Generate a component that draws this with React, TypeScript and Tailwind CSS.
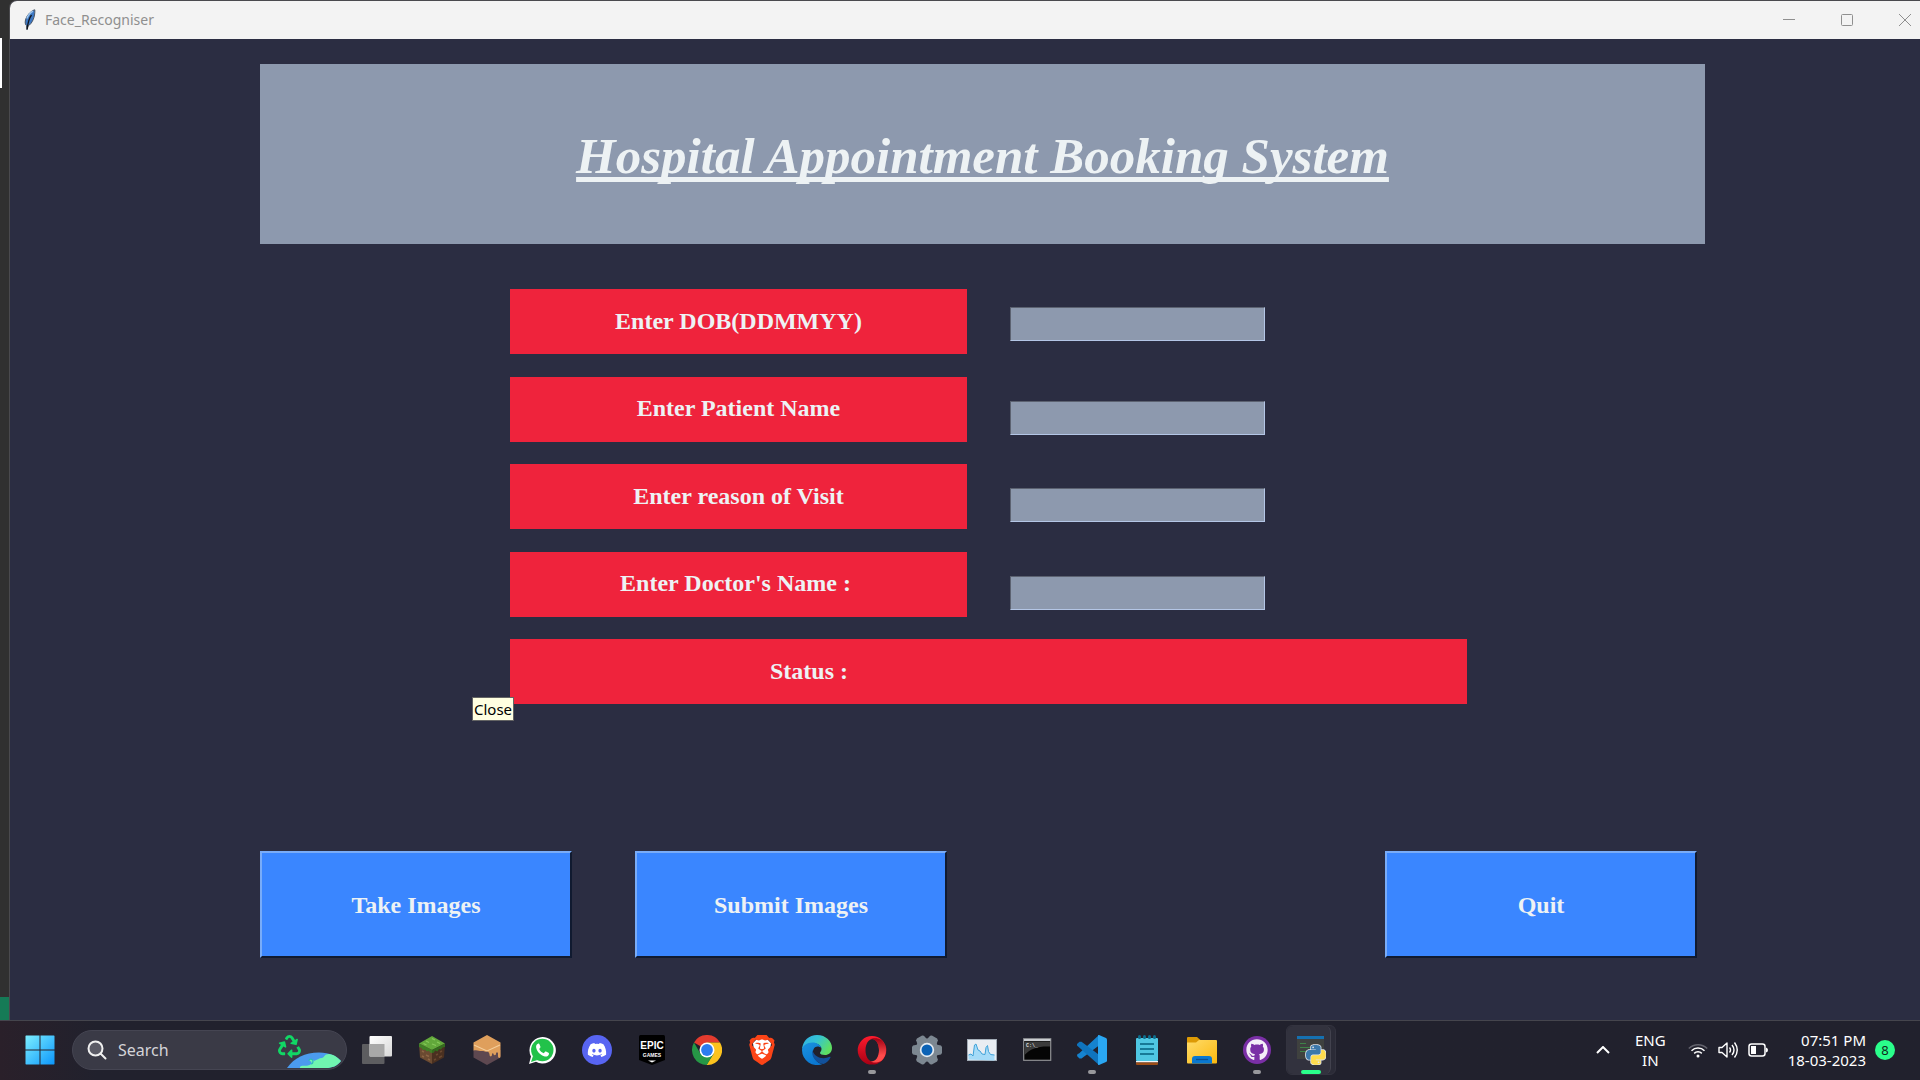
import { useState, type ReactNode } from "react";
import { FaDiscord, FaGithub, FaRecycle } from "react-icons/fa";
import { SiBrave } from "react-icons/si";

const PYTHON_HALF =
  "M14.25.18l.9.2.73.26.59.3.45.32.34.34.25.34.16.33.1.3.04.26.02.2-.01.13V8.5l-.05.63-.13.55-.21.46-.26.38-.3.31-.33.25-.35.19-.35.14-.33.1-.3.07-.26.04-.21.02H8.77l-.69.05-.59.14-.5.22-.41.27-.33.32-.27.35-.2.36-.15.37-.1.35-.07.32-.04.27-.02.21v3.06H3.17l-.21-.03-.28-.07-.32-.12-.35-.18-.36-.26-.36-.36-.35-.46-.32-.59-.28-.73-.21-.88-.14-1.05-.05-1.23.06-1.22.16-1.04.24-.87.32-.71.36-.57.4-.44.42-.33.42-.24.4-.16.36-.1.32-.05.24-.01h.16l.06.01h8.16v-.83H6.18l-.01-2.75-.02-.37.05-.34.11-.31.17-.28.25-.26.31-.23.38-.2.44-.18.51-.15.58-.12.64-.1.71-.06.77-.04.84-.02 1.27.05zm-6.3 1.98l-.23.33-.08.41.08.41.23.34.33.22.41.09.41-.09.33-.22.23-.34.08-.41-.08-.41-.23-.33-.33-.22-.41-.09-.41.09z";

function Svg({ children }: { children: ReactNode }) {
  return (
    <svg viewBox="0 0 30 30" className="size-[30px] shrink-0" aria-hidden="true">
      {children}
    </svg>
  );
}

function Feather() {
  return (
    <svg viewBox="0 0 12 22" className="h-[22px] w-3 shrink-0" aria-hidden="true">
      <path d="M10.800.8C7 1.600 1.400 7.500 1.200 13c0 1.600.4 3 1.300 3.600L3 21l1.200-4.200C8 15 11.300 7.800 10.800.8z" fill="#3d78c4" stroke="#4a5462" strokeWidth="1" />
      <path d="M7.500 6C6 8 4 12 3.200 20" stroke="#10151d" strokeWidth="1.300" fill="none" />
      <path d="M2.800 9.500C4.500 5.500 6.500 3.500 9 2.200" stroke="#9cc4ec" strokeWidth="1.500" fill="none" />
    </svg>
  );
}

function WindowsLogo() {
  return (
    <Svg>
      <defs>
        <linearGradient id="win" x1="0" y1="0" x2="30" y2="30" gradientUnits="userSpaceOnUse">
          <stop offset="0" stopColor="#7ff0ff" />
          <stop offset="1" stopColor="#0a95fb" />
        </linearGradient>
      </defs>
      <path d="M1 .5h13.500V14.500H.5V1zM15.500.5H29l.5.5v13.500h-14zM.5 15.500h14v14H1l-.5-.5zM15.500 15.500h14V29l-.5.5H15.500z" fill="url(#win)" />
    </Svg>
  );
}

function TaskView() {
  return (
    <Svg>
      <defs>
        <linearGradient id="tv" x1="0" y1="0" x2="1" y2="1">
          <stop offset="0" stopColor="#fff" />
          <stop offset="1" stopColor="#d8d8d8" />
        </linearGradient>
      </defs>
      <rect x="0" y="9" width="22.500" height="20" rx="1" fill="#5d5d60" />
      <rect x="7.500" y="1" width="22.500" height="20.500" rx="1" fill="url(#tv)" />
      <rect x="7.500" y="9" width="15" height="12.500" fill="#a8a8a8" />
    </Svg>
  );
}

function GrassBlock() {
  return (
    <Svg>
      <path d="M2 8.500 15 15v14L3 22.500z" fill="#6b4a31" />
      <path d="M28 8.500 15 15v14l12-6.500z" fill="#4a3020" />
      <path d="M15 1 28 8.500 15 15 2 8.500z" fill="#62a83b" />
      <path d="M2 8.500 15 15v3l-2-.5-1-2-2 1-2-2-2 .5-1.500-2L2 12z" fill="#3f7f25" />
      <path d="M28 8.500 15 15v3l2-.5 1-2 2.500 1 1.500-2.500 2 .5 1.500-2L28 12z" fill="#336b1e" />
      <path d="m9 6 3 1.500M15 3.500 18 5M15 9l4 1.500M20 7l3 1.500M6.500 8.500l3 1.500" stroke="#86c95a" strokeWidth="1.200" />
      <path d="m5 16 2 1M9 20l3 1.500M5 21l2 1M11 24l2 1" stroke="#8c6545" strokeWidth="1.500" />
      <path d="m19 20 2-1M23 17l2-1M17 25l2-1M22 22.500l3-1.500" stroke="#6b4930" strokeWidth="1.500" />
    </Svg>
  );
}

function HoneyBlock() {
  return (
    <Svg>
      <path d="M1.500 15h27v7.500L15 30 1.500 22.500z" fill="#5e4850" />
      <path d="M15 0 28.500 7.500V21c0 2.500-2.500 2.500-2.500 0v-3c-1-1.500-2-.5-2 1s-2.500 1.500-2.500 0c0-1-1.500-1-1.500.5 0 2.500-2.500 2.500-2.500 0 0-2-1.500-3.500-3-3-1.500.7-3-.8-4.500-.5-2.500.5-4-1.500-8.500-.5V7.500z" fill="#df9f5c" />
      <path d="M2 10 15 16 28 10" stroke="#f5cf9c" strokeWidth="1.100" fill="none" />
    </Svg>
  );
}

function WhatsApp() {
  return (
    <Svg>
      <path d="M2 29 4 21.500A13.200 13.200 0 1 1 9 26.700z" fill="#fff" />
      <circle cx="15.300" cy="15" r="11.200" fill="#22c24a" />
      <path d="m4 27 2-6 4.500 4z" fill="#22c24a" />
      <path d="M11.500 8.500c-1.500.3-2.700 2-2.400 3.800.8 4.500 4.600 8.200 8.800 9.200 1.800.4 3.900-.9 4.100-2.600.1-.8-.3-1-1-1.400l-2-.9c-.5-.2-.8-.1-1.200.4l-1 1.200c-2-.7-3.700-2.300-4.600-4.300.5-.6 1.200-1.200 1.300-1.700 0-.7-.8-2.200-1.200-3.100-.2-.5-.5-.6-.8-.6z" fill="#fff" />
    </Svg>
  );
}

function Discord() {
  return (
    <span className="flex size-[30px] items-center justify-center rounded-full bg-[#5865f2]">
      <FaDiscord className="size-5 text-white" />
    </span>
  );
}

function Epic() {
  return (
    <Svg>
      <path d="M3.500 0h23q1.500 0 1.500 1.500V25L15 30 2 25V1.500Q2 0 3.500 0z" fill="#000" />
      <text x="15" y="14" textAnchor="middle" fontFamily="'Liberation Sans Narrow','Liberation Sans'" fontWeight="700" fontSize="10" fill="#fff">EPIC</text>
      <text x="15" y="22" textAnchor="middle" fontFamily="'Liberation Sans'" fontWeight="700" fontSize="5" fill="#fff">GAMES</text>
      <path d="M11 25.500h8L15 27.500z" fill="#fff" />
    </Svg>
  );
}

function Chrome() {
  return (
    <Svg>
      <path d="M15 15 2 7.500A15 15 0 0 1 28 7.500H15z" fill="#e33b2e" />
      <path d="M28 7.500A15 15 0 0 1 14.500 30L21.500 18.700 15 7.500z" fill="#fcc31e" />
      <path d="M2 7.500A15 15 0 0 0 14.800 30L21.500 18.700 8.500 18.700z" fill="#269746" />
      <circle cx="15" cy="15" r="7.500" fill="#fff" />
      <circle cx="15" cy="15" r="5.900" fill="#2c7cf0" />
    </Svg>
  );
}

function Brave() {
  return (
    <span className="relative flex size-[30px] items-center justify-center">
      <svg viewBox="0 0 30 30" className="absolute size-[30px]" aria-hidden="true">
        <path d="M10 4h10l4 4-1 8-2 7-6 4-6-4-2-7-1-8z" fill="#fff" />
      </svg>
      <SiBrave className="relative size-[30px] text-[#fb4417]" />
    </span>
  );
}

function Edge() {
  return (
    <Svg>
      <defs>
        <linearGradient id="eg1" x1="0" y1="0" x2="1" y2="0.500">
          <stop offset="0" stopColor="#2faee8" />
          <stop offset="0.500" stopColor="#35c3d3" />
          <stop offset="1" stopColor="#5edf62" />
        </linearGradient>
        <linearGradient id="eg2" x1="0" y1="0" x2="0.600" y2="1">
          <stop offset="0" stopColor="#1b93e0" />
          <stop offset="1" stopColor="#0a76d0" />
        </linearGradient>
      </defs>
      <path d="M0 14C1 5.500 7 0 15 0c9 0 15 6.500 15 13 0 4.500-3.500 7-7 7-3 0-5-1-5-2s1.500-1.500 1.500-4c0-3-3-5.500-7-5.500C6.500 8.500 2 11 0 14z" fill="url(#eg1)" />
      <path d="M0 15c0-4 5-7.500 10.500-7.500 4.500 0 8.300 2.500 9 5.500-1-1-2.500-1.500-4-1.500-4 0-5.500 5-4 9.500 1.500 4 5 8 9 8A15 15 0 0 1 0 15z" fill="url(#eg2)" />
      <path d="M10.500 15c-1.500 7 3.500 13 11 14 3-1 5.500-3.500 7-6.500.3-.7-.2-1-.8-.7C21 25 12 22.500 10.500 15z" fill="#12519b" />
    </Svg>
  );
}

function Opera() {
  return (
    <Svg>
      <defs>
        <linearGradient id="op" x1="0" y1="0" x2="0" y2="1">
          <stop offset="0" stopColor="#ff1b2d" />
          <stop offset="1" stopColor="#a70014" />
        </linearGradient>
        <linearGradient id="op2" x1="0" y1="0" x2="0" y2="1">
          <stop offset="0" stopColor="#9c0012" />
          <stop offset="0.700" stopColor="#ff4b4b" />
        </linearGradient>
      </defs>
      <path d="M15 1a14.300 14.300 0 1 0 0 28.600A14.300 14.300 0 0 0 15 1zm.5 3C19.500 4 22 9 22 15.300s-2.500 11.200-6.500 11.200-7-5-7-11.200S11.500 4 15.500 4z" fill="url(#op)" fillRule="evenodd" />
      <path d="M14 4c2-1.500 7.500-1 10.500 1A14 14 0 0 1 24.500 25.700c-3 2-8 2.500-10.500.8C19.500 26.500 22 21 22 15.300S19.500 4 14 4z" fill="url(#op2)" />
    </Svg>
  );
}

function Settings() {
  return (
    <Svg>
      <g fill="#7c8791">
        <circle cx="15" cy="15" r="11.500" />
        {[30, 90, 150].map((a) => (
          <path key={a} d="M12 0h6l1.500 1 1 5v18l-1 5-1.500 1h-6l-1.500-1-1-5V6l1-5z" transform={`rotate(${a} 15 15)`} />
        ))}
      </g>
      <circle cx="15" cy="15" r="7.200" fill="#e6ecf2" />
      <circle cx="15" cy="15" r="5.500" fill="#0b62b5" />
    </Svg>
  );
}

function Monitor() {
  return (
    <Svg>
      <rect x=".5" y="4.500" width="29" height="21" fill="#e9edf2" stroke="#a3acb6" />
      <path d="M1.500 24.500V20l2.500-1 2 2 1.500-11 1.500-1 2 6 2 1 2 3 3 .5 1-7 1.500-2 1 6 2 3 4 .5v5.500z" fill="#a5dbf8" />
      <path d="M1.500 20l2.500-1 2 2 1.500-11 1.500-1 2 6 2 1 2 3 3 .5 1-7 1.500-2 1 6 2 3 4 .5" fill="none" stroke="#3fa2d9" />
    </Svg>
  );
}

function Terminal() {
  return (
    <Svg>
      <rect x="1.700" y="3.700" width="27" height="21.600" fill="#050505" stroke="#8f9194" strokeWidth="1.200" />
      <path d="M2 4h26.500v2H2z" fill="#c9ccd0" />
      <path d="M2.500 6.500h25.500v5C17 11 9 13 2.500 20z" fill="#3b3b3b" />
      <text x="4" y="11.500" fontFamily="'Liberation Mono'" fontSize="5" fontWeight="700" fill="#ddd">C:\_</text>
    </Svg>
  );
}

function Code() {
  return (
    <Svg>
      <path d="M22 0 2 18.500l-1.500.5L0 21l2.500 2.500 2 .1L24 9z" fill="#1583cf" />
      <path d="M4.500 6.700 2.500 6.700 0 9v1.500L22 30l3-8z" fill="#0f74bd" />
      <path d="M22 0l7 3q1 .5 1 1.500v21q0 1-1 1.500l-7 3c-1 .3-1-.5-1-1.500V1.500C21 .5 21-.3 22 0z" fill="#2aa7f2" />
    </Svg>
  );
}

function Notepad() {
  return (
    <Svg>
      <rect x="4" y="3" width="22" height="23" rx="1" fill="#4fc7e2" />
      <path d="M4 26h22v1.500H4z" fill="#f4f4f4" />
      <path d="M4 27.500h22V29q0 1-1 1H5q-1 0-1-1z" fill="#9c4d16" />
      <path d="M8 9h14M8 14h14M8 19h14" stroke="#06617f" strokeWidth="1.700" />
      <path d="M7.500 1.500v1M12.500 1.500v1M17.500 1.500v1M22.500 1.500v1" stroke="#0d6d8c" strokeWidth="3" strokeLinecap="round" />
    </Svg>
  );
}

function Folder() {
  return (
    <Svg>
      <defs>
        <linearGradient id="fo" x1="0" y1="0" x2="1" y2="1">
          <stop offset="0" stopColor="#ffdc6a" />
          <stop offset="1" stopColor="#fbb80e" />
        </linearGradient>
      </defs>
      <path d="M0 3q0-1 1-1h9l4 3.500L10 9H0z" fill="#dd9a05" />
      <path d="M0 7.500h9L12 5h17q1 0 1 1v21.500q0 1-1 1H1q-1 0-1-1z" fill="url(#fo)" />
      <path d="M5 28.500V24q0-3 3-3h14q3 0 3 3v4.500z" fill="#0a78d0" />
      <path d="M9 24.500h12" stroke="#0a4f94" strokeWidth="1.300" />
    </Svg>
  );
}

function GitHubDesktop() {
  return (
    <span className="flex size-7 items-center justify-center rounded-full bg-[#7a2fa6]">
      <FaGithub className="size-[22px] text-[#f4eef8]" />
    </span>
  );
}

function PythonWindow() {
  return (
    <Svg>
      <path d="M1 2h27v22H1z" fill="#3f413f" />
      <path d="M1 1h27v3H1z" fill="#1570b0" />
      <path d="M4 8.500h6M4 12.500h11M4 16.500h8" stroke="#3e8348" strokeWidth="1.200" />
      <g transform="translate(10 10) scale(.82)">
        <g stroke="#dfe4ea" strokeWidth="2" fill="#dfe4ea">
          <path d={PYTHON_HALF} />
          <path d={PYTHON_HALF} transform="rotate(180 12 12)" />
        </g>
        <path d={PYTHON_HALF} fill="#3c78ab" />
        <path d={PYTHON_HALF} fill="#ffdc4d" transform="rotate(180 12 12)" />
      </g>
    </Svg>
  );
}

type TaskApp = { name: string; icon: ReactNode; state?: "open" | "active" };

const apps: TaskApp[] = [
  { name: "Task View", icon: <TaskView /> },
  { name: "Minecraft", icon: <GrassBlock /> },
  { name: "Launcher", icon: <HoneyBlock /> },
  { name: "WhatsApp", icon: <WhatsApp /> },
  { name: "Discord", icon: <Discord /> },
  { name: "Epic Games", icon: <Epic /> },
  { name: "Chrome", icon: <Chrome /> },
  { name: "Brave", icon: <Brave /> },
  { name: "Edge", icon: <Edge /> },
  { name: "Opera", icon: <Opera />, state: "open" },
  { name: "Settings", icon: <Settings /> },
  { name: "Monitor", icon: <Monitor /> },
  { name: "Command Prompt", icon: <Terminal /> },
  { name: "Visual Studio Code", icon: <Code />, state: "open" },
  { name: "Notepad", icon: <Notepad /> },
  { name: "File Explorer", icon: <Folder /> },
  { name: "GitHub Desktop", icon: <GitHubDesktop />, state: "open" },
  { name: "Python", icon: <PythonWindow />, state: "active" },
];

function TaskButton({ app }: { app: TaskApp }) {
  const active = app.state === "active";
  return (
    <button
      type="button"
      aria-label={app.name}
      className={
        active
          ? "relative ml-0.5 flex h-[50px] w-[50px] items-center justify-center rounded-md border border-[#33333f] bg-[#2b2b37]"
          : "relative flex h-[50px] w-[55px] items-center justify-center"
      }
    >
      {active && <span className="absolute inset-y-0 left-0 w-[44px] rounded-md border-r border-[#42424e] bg-[#32323e]" />}
      <span className="relative">{app.icon}</span>
      {app.state === "open" && <span className="absolute bottom-px h-1 w-2 rounded-full bg-[#98989c]" />}
      {active && <span className="absolute bottom-0 h-1 w-5 rounded-full bg-[#2aff8b]" />}
    </button>
  );
}

function EarthArt() {
  return (
    <svg viewBox="0 0 70 40" className="h-10 w-[70px] shrink-0" aria-hidden="true">
      <g transform="translate(5 0)">
        <path d="M11 38C18 28 29 22.500 43 22.500c11 0 18 4 22 8.500-4 5-9 7-15 7z" fill="#4b9bee" />
        <path d="M24 38c-1-3 5-2 8-2.500 5-1 4-5 1-4.500 0-3 4-2.500 5 0 3-1 5-3 8-3 3-1 2-4 7-4 6 1 9 4 12 7-4 5-9 7-15 7z" fill="#70f5b0" />
        <path d="M33 31c0-3 4-2 4 0s-1 3-2 3" stroke="#2fb5c0" strokeWidth="1.200" fill="none" />
      </g>
      <FaRecycle x="7" y="5" size={23} color="#11d765" />
    </svg>
  );
}

function Taskbar() {
  const [query, setQuery] = useState("");
  return (
    <footer className="flex h-[60px] items-center border-t border-[#45454d] bg-linear-to-r from-[#2a202a] via-[#21212d] via-5% to-[#21212d] pb-0.5 pl-[25px] pr-[25px] font-['Noto_Sans','Open_Sans',sans-serif] text-white">
      <button type="button" aria-label="Start" className="shrink-0">
        <WindowsLogo />
      </button>
      <label className="ml-[17px] flex h-10 w-[275px] shrink-0 items-center rounded-full border border-[#454552] bg-[#3a3a46] pl-3.5 pr-[5px]">
        <svg viewBox="0 0 20 20" className="size-5 shrink-0" fill="none" aria-hidden="true">
          <circle cx="8.500" cy="8.500" r="7" stroke="#f0f0f0" strokeWidth="2" fill="#5b5b66" />
          <path d="m13.500 13.500 5 5" stroke="#f0f0f0" strokeWidth="2" strokeLinecap="round" />
        </svg>
        <input
          type="text"
          aria-label="Search"
          placeholder="Search"
          value={query}
          onChange={(e) => setQuery(e.target.value)}
          className="ml-[11px] w-0 min-w-0 flex-1 bg-transparent text-base text-white outline-none placeholder:text-[#d4d4d8]"
        />
        <EarthArt />
      </label>
      <nav aria-label="Applications" className="ml-0.5 flex shrink-0 items-center">
        {apps.map((app) => (
          <TaskButton key={app.name} app={app} />
        ))}
      </nav>
      <div className="ml-auto flex shrink-0 items-center text-[15px] leading-5">
        <button type="button" aria-label="Show hidden icons">
          <svg viewBox="0 0 14 8" className="h-2 w-3.5" fill="none" stroke="#fff" strokeWidth="2" aria-hidden="true">
            <path d="m1 7 6-6 6 6" />
          </svg>
        </button>
        <button type="button" className="ml-[25px] text-center">
          ENG
          <br />
          IN
        </button>
        <button type="button" aria-label="Network, volume and battery" className="ml-[22px] flex items-center gap-2.5">
          <svg viewBox="0 0 20 16" className="h-4 w-5" fill="none" stroke="#fff" strokeWidth="1.500" aria-hidden="true">
            <path d="M.8 6.500a13 13 0 0 1 18.400 0" stroke="#63636d" />
            <path d="M3.500 8.800a9.200 9.200 0 0 1 13 0M6.200 11.400a5.400 5.400 0 0 1 7.600 0" />
            <circle cx="10" cy="14" r="1.500" fill="#fff" stroke="none" />
          </svg>
          <svg viewBox="0 0 20 18" className="h-[18px] w-5" fill="none" stroke="#fff" strokeWidth="1.400" aria-hidden="true">
            <path d="M1 6.500h3L9 2v14L4 11.500H1z" strokeLinejoin="round" />
            <path d="M11.500 6.500q2 2.500 0 5M14 4q4 5 0 10M16.500 1.500q5.500 7.500 0 15" />
          </svg>
          <svg viewBox="0 0 20 14" className="h-3.5 w-5" aria-hidden="true">
            <rect x="1" y="1" width="16" height="12" rx="2.500" fill="none" stroke="#fff" strokeWidth="1.500" />
            <rect x="3" y="3" width="5" height="8" fill="#fff" />
            <path d="M18 4.500q2 .5 2 2.500t-2 2.500z" fill="#fff" />
          </svg>
        </button>
        <button type="button" className="ml-5 text-right">
          07:51 PM
          <br />
          18-03-2023
        </button>
        <span className="ml-[9px] flex size-5 items-center justify-center rounded-full bg-[#2aff8b] text-[13px] text-[#10291c]">8</span>
      </div>
    </footer>
  );
}

const fields = [
  { id: "dob", label: "Enter DOB(DDMMYY)", first: true },
  { id: "patient", label: "Enter Patient Name" },
  { id: "reason", label: "Enter reason of Visit" },
  { id: "doctor", label: "Enter Doctor's Name : " },
];

const actionClass =
  "h-[107px] w-[312px] shrink-0 border-2 border-t-[#79acf8] border-l-[#79acf8] border-r-[#101a30] border-b-[#101a30] bg-[#3a86ff] text-2xl font-bold text-[#edf2f4]";

function BookingForm() {
  const [values, setValues] = useState<Record<string, string>>({});
  return (
    <form className="flex flex-1 flex-col font-['Liberation_Serif',serif]" onSubmit={(e) => e.preventDefault()}>
      <div className="ml-[500px] mt-[45px] flex h-[415px] flex-col justify-between">
        {fields.map((f) => (
          <div key={f.id} className="flex items-start">
            <label
              htmlFor={f.id}
              className="flex h-[65px] w-[457px] shrink-0 items-center justify-center whitespace-pre bg-[#ef233c] pb-0.5 text-2xl font-bold text-[#edf2f4]"
            >
              {f.label}
            </label>
            <input
              id={f.id}
              type="text"
              value={values[f.id] ?? ""}
              onChange={(e) => setValues({ ...values, [f.id]: e.target.value })}
              className={
                (f.first ? "mt-[18px]" : "mt-[24px]") +
                " ml-[43px] h-[34px] w-[255px] shrink-0 border border-t-[#5c6271] border-l-[#5c6271] border-r-[#b4c6e6] border-b-[#b4c6e6] bg-[#8d99ae] px-1 text-lg text-[#edf2f4] outline-none"
              }
            />
          </div>
        ))}
        <div className="relative w-[957px]">
          <output className="flex h-[65px] items-center bg-[#ef233c] pb-0.5 pl-[260px] text-2xl font-bold text-[#edf2f4]">Status :</output>
          <span
            role="tooltip"
            className="absolute -left-[38px] top-[58px] flex h-6 w-[42px] items-center justify-center border border-[#646464] bg-[#ffffe1] font-['Noto_Sans','Open_Sans',sans-serif] text-[15px] text-black"
          >
            Close
          </span>
        </div>
      </div>
      <div className="ml-[250px] mr-[223px] mt-[147px] flex">
        <button type="button" className={actionClass}>
          Take Images
        </button>
        <button type="submit" className={actionClass + " ml-[63px]"}>
          Submit Images
        </button>
        <button type="button" className={actionClass + " ml-auto"}>
          Quit
        </button>
      </div>
    </form>
  );
}

export default function App() {
  return (
    <div className="flex min-h-screen flex-col overflow-hidden bg-[#303030]">
      <div className="flex flex-1">
        <div className="flex w-[9px] shrink-0 flex-col">
          <div className="mt-[38px] h-[50px] w-0.5 bg-white" />
          <div className="mt-auto h-[23px] bg-[#157a56]" />
        </div>
        <div className="flex min-w-0 flex-1 flex-col overflow-hidden rounded-tl-lg border-l border-t border-[#4a4a4e] bg-[#2b2d42]">
          <header className="flex h-[38px] items-center bg-[#f3f3f3] pl-3.5 pr-[9px] text-[#8f8f8f]">
            <Feather />
            <h2 className="ml-[9px] font-['Noto_Sans','Open_Sans',sans-serif] text-sm">Face_Recogniser</h2>
            <div className="ml-auto flex items-center gap-[46px]">
              <button type="button" aria-label="Minimize">
                <svg viewBox="0 0 12 12" className="size-3" stroke="currentColor" aria-hidden="true">
                  <path d="M0 5.500h12" />
                </svg>
              </button>
              <button type="button" aria-label="Maximize">
                <svg viewBox="0 0 12 12" className="size-3" fill="none" stroke="currentColor" aria-hidden="true">
                  <rect x=".5" y=".5" width="11" height="11" rx="1" />
                </svg>
              </button>
              <button type="button" aria-label="Close window">
                <svg viewBox="0 0 12 12" className="size-3" stroke="currentColor" aria-hidden="true">
                  <path d="m0 0 12 12M12 0 0 12" />
                </svg>
              </button>
            </div>
          </header>
          <main className="flex flex-1 flex-col">
            <div className="ml-[250px] mr-[215px] mt-[25px] flex h-[180px] items-center justify-center bg-[#8d99ae] pt-1">
              <h1 className="font-['Liberation_Serif',serif] text-[51px] font-bold italic leading-none text-[#edf2f4] underline decoration-[5px] underline-offset-[4px] [text-decoration-skip-ink:none]">
                Hospital Appointment Booking System
              </h1>
            </div>
            <BookingForm />
          </main>
        </div>
      </div>
      <Taskbar />
    </div>
  );
}
